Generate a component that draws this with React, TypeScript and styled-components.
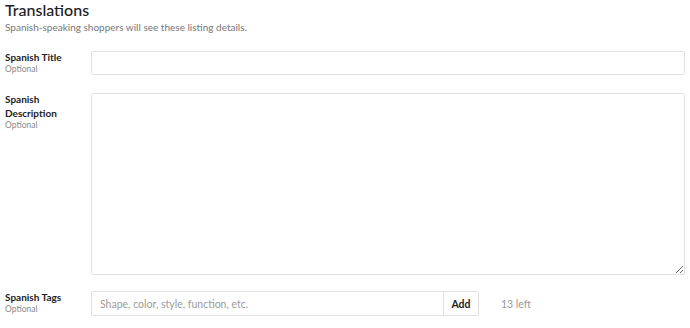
import styled, { createGlobalStyle } from 'styled-components';

const GlobalStyle = createGlobalStyle`
  html, body {
    margin: 0;
    padding: 0;
    background: #ffffff;
  }
  body {
    font-family: Lato, "Liberation Sans", sans-serif;
    color: #222222;
  }
`;

export default function App() {
    return (
        <>
            <GlobalStyle />
            <Section>
                <Header>
                    <Title>Translations</Title>
                    <Subtitle>Spanish-speaking shoppers will see these listing details.</Subtitle>
                </Header>

                <FieldRow $gap={18}>
                    <LabelCol>
                        <Label>Spanish Title</Label>
                        <Hint>Optional</Hint>
                    </LabelCol>
                    <TextInput type="text" />
                </FieldRow>

                <FieldRow $gap={16}>
                    <LabelCol>
                        <Label>Spanish<br />Description</Label>
                        <Hint>Optional</Hint>
                    </LabelCol>
                    <TextArea />
                </FieldRow>

                <FieldRow $gap={0}>
                    <LabelCol>
                        <Label>Spanish Tags</Label>
                        <Hint>Optional</Hint>
                    </LabelCol>
                    <TagsLine>
                        <TagsGroup>
                            <TagsInput type="text" placeholder="Shape, color, style, function, etc." />
                            <AddButton>Add</AddButton>
                        </TagsGroup>
                        <Remaining>13 left</Remaining>
                    </TagsLine>
                </FieldRow>
            </Section>
        </>
    );
}

const Section = styled.div`
    width: 690px;
    height: 328px;
    padding: 0 5px;
    box-sizing: border-box;
    display: flex;
    flex-direction: column;
    overflow: hidden;
`;

const Header = styled.div`
    height: 51px;
    padding-top: 1px;
    box-sizing: border-box;
`;

const Title = styled.h2`
    margin: 0;
    font-size: 16px;
    font-weight: 500;
    line-height: 18px;
    color: #222222;
`;

const Subtitle = styled.p`
    margin: 1px 0 0;
    font-size: 10px;
    line-height: 14px;
    color: #777777;
`;

const FieldRow = styled.div<{ $gap: number }>`
    display: grid;
    grid-template-columns: 86px 1fr;
    align-items: start;
    margin-bottom: ${(p) => p.$gap}px;
`;

const LabelCol = styled.div`
    display: flex;
    flex-direction: column;
    margin-top: -1px;
`;

const Label = styled.span`
    font-size: 10px;
    font-weight: 700;
    line-height: 14px;
    color: #222222;
`;

const Hint = styled.span`
    font-size: 8.5px;
    line-height: 11px;
    color: #8a8a8a;
`;

const fieldBorder = `
    border: 1px solid #e1e1e1;
    border-radius: 2px;
    background: #ffffff;
    box-sizing: border-box;
    outline: none;
    font-family: inherit;
    display: block;
`;

const TextInput = styled.input`
    ${fieldBorder}
    width: 594px;
    height: 24px;
    padding: 0 8px;
`;

const TextArea = styled.textarea`
    ${fieldBorder}
    width: 594px;
    height: 182px;
    padding: 6px 8px;
    resize: vertical;
`;

const TagsLine = styled.div`
    display: flex;
    align-items: center;
    gap: 22px;
`;

const TagsGroup = styled.div`
    display: flex;
    width: 388px;
    height: 25px;
    border: 1px solid #e1e1e1;
    border-radius: 2px;
    box-sizing: border-box;
    overflow: hidden;
`;

const TagsInput = styled.input`
    flex: 1;
    min-width: 0;
    border: none;
    outline: none;
    padding: 0 8px;
    font-family: inherit;
    font-size: 10.5px;
    color: #222222;

    &::placeholder {
        color: #9a9a9a;
    }
`;

const AddButton = styled.button`
    width: 35px;
    border: none;
    border-left: 1px solid #e1e1e1;
    background: #ffffff;
    font-family: inherit;
    font-size: 10.5px;
    font-weight: 700;
    color: #222222;
    padding: 0;
    cursor: pointer;
`;

const Remaining = styled.span`
    font-size: 10.5px;
    color: #9a9a9a;
`;
